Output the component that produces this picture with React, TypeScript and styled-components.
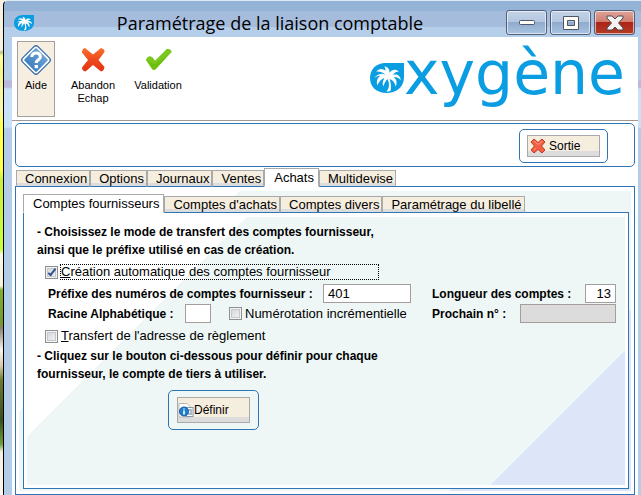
import React, { useState } from "react";
import styled, { createGlobalStyle, css } from "styled-components";

const BLUE = "#2e75b6";
const CREAM = "#f5edde";
const GREY = "#dcdcdc";
const BRAND = "#0a9de2";

const GlobalStyle = createGlobalStyle`
  *, *::before, *::after { box-sizing: border-box; }
  body {
    margin: 0;
    background: #fff;
    color: #000;
    font: 12px/16px "Liberation Sans", Arial, sans-serif;
  }
  button, input { font: inherit; color: inherit; margin: 0; }
`;

const Desktop = styled.div`
  display: flex;
  min-height: 100vh;
  padding-left: 3px;
  background: linear-gradient(
    #f4f1e2 0 50px, #b9c27a 52px, #ffff9a 56px, #f6f58a 70px, #f8f6b0 110px, #ffff50 125px,
    #fdff48 170px, #c8ee40 180px, #ccff3c 250px, #f6f8e6 254px, #f4f0de 286px, #83ad2e 290px,
    #75982c 324px, #8a8270 328px, #f7f4ee 350px, #d6c9a8 366px, #6d7a30 380px, #38501c 420px,
    #6f9c3c 444px, #f3efe2 452px, #fbf6ec 495px
  );
`;

const Window = styled.main`
  flex: 1;
  min-width: 0;
  display: flex;
  flex-direction: column;
  border-left: 1px solid #000;
  border-top: 1px solid #dfe9f4;
  border-top-left-radius: 5px;
  padding: 0 3px 0 8px;
  background: linear-gradient(
    #95b3d6 0 10px, #a6bcdd 10px 26px, #b5cfea 26px 78px, #b9b9dc 80px, #b9b9dc 86px,
    #c9e2f7 88px 126px, #b3cce7 128px
  );
`;

const TitleBar = styled.header`
  display: flex;
  align-items: center;
  height: 36px;
  padding: 7px 3px 0 2px;
`;

const Title = styled.h1`
  flex: 1;
  margin: 0;
  text-align: center;
  white-space: nowrap;
  font: 400 18px/26px "Open Sans", "Noto Sans", sans-serif;
`;

const WindowButtons = styled.div`
  display: flex;
  gap: 3px;
`;

const WindowButton = styled.button<{ $close?: boolean }>`
  width: 41px;
  height: 25px;
  padding: 0;
  display: flex;
  align-items: center;
  justify-content: center;
  border: 1px solid #50607a;
  border-radius: 3px;
  box-shadow: inset 0 0 0 1px rgba(255, 255, 255, 0.6);
  background: ${(p) =>
    p.$close
      ? "linear-gradient(#dfa49a, #cf7b6c 48%, #ac2418 50%, #b53c22)"
      : "linear-gradient(#c3d3e8, #b3c6df 48%, #91abcd 50%, #a8c2e0)"};
`;

const Client = styled.div`
  flex: 1;
  display: flex;
  flex-direction: column;
  background: #fff;
`;

const Toolbar = styled.div`
  display: flex;
  align-items: flex-start;
  height: 84px;
  padding: 4px 13px 0 5px;
  border-bottom: 1px solid #a09898;
`;

const ToolButton = styled.button<{ $active?: boolean; $wide?: boolean }>`
  display: flex;
  flex-direction: column;
  align-items: center;
  width: ${(p) => (p.$active ? "38px" : p.$wide ? "76px" : "54px")};
  height: 76px;
  padding: 1px 0 0;
  border: 1px solid ${(p) => (p.$active ? "#a4a09c" : "transparent")};
  background: ${(p) => (p.$active ? "#f6eee0" : "transparent")};
  font-size: 11px;
  line-height: 13px;
  svg { margin-bottom: 2px; }
`;

const Brand = styled.div`
  display: flex;
  align-items: flex-start;
  height: 76px;
  margin-left: auto;
  color: ${BRAND};
  font: 400 60px/64px "DejaVu Sans", sans-serif;
`;

const BrandEmblem = styled.span`
  display: flex;
  padding-top: 22px;
`;

const Body = styled.div`
  flex: 1;
  display: flex;
  flex-direction: column;
  padding: 2px 3px 0;
`;

const ActionBar = styled.div`
  display: flex;
  justify-content: flex-end;
  padding: 5px 26px 3px;
  border: 1px solid ${BLUE};
  border-radius: 5px;
`;

const ButtonFrame = styled.div<{ $tall?: boolean }>`
  display: flex;
  padding: ${(p) => (p.$tall ? "6px 8px" : "5px 7px")};
  border: 1px solid ${BLUE};
  border-radius: 5px;
`;

const PushButton = styled.button<{ $tall?: boolean }>`
  display: flex;
  align-items: center;
  gap: ${(p) => (p.$tall ? "0" : "3px")};
  width: 73px;
  height: ${(p) => (p.$tall ? "26px" : "22px")};
  padding: ${(p) => (p.$tall ? "0" : "0 0 0 2px")};
  border: 1px solid #a9a9a9;
  background: linear-gradient(to top, ${GREY} 5px, ${CREAM} 5px);
`;

const TabList = styled.div`
  display: flex;
  align-items: flex-end;
  height: 19px;
  margin-bottom: -1px;
`;

const Tab = styled.button<{ $active: boolean }>`
  position: relative;
  display: flex;
  align-items: flex-end;
  height: 17px;
  padding: 0 2px 0 8px;
  white-space: nowrap;
  border: 1px solid #aaa;
  border-bottom-color: ${BLUE};
  font-size: 13px;
  line-height: 15px;
  background: linear-gradient(to top, ${GREY} 3px, ${CREAM} 3px);
  ${(p) =>
    p.$active &&
    css`
      align-items: center;
      height: 19px;
      padding: 0 4px 0 9px;
      background: #fff;
      border-bottom-color: #fff;
    `}
`;

const MainTabs = styled.div`
  margin-top: 1px;
  padding-left: 1px;
`;

/* A bordered page whose inset backdrop shows two diagonal corners. */
const TabPage = styled.section<{ $near: number; $far: number }>`
  flex: 1;
  display: flex;
  flex-direction: column;
  padding: 4px 3px 3px;
  border: 1px solid ${BLUE};
  background: linear-gradient(
      135deg,
      #fff ${(p) => p.$near}px,
      #eef7f6 ${(p) => p.$near}px calc(100% - ${(p) => p.$far}px),
      #dde6f8 calc(100% - ${(p) => p.$far}px)
    )
    content-box;
`;

const SubTabs = styled.div`
  flex: 1;
  display: flex;
  flex-direction: column;
  padding: 3px 2px 2px 4px;
`;

const PageShell = styled.div`
  flex: 1;
  display: flex;
  background: #fff;
`;

const Form = styled.form`
  flex: 1;
  display: flex;
  flex-direction: column;
  padding: 6px 9px 4px 10px;
`;

const Hint = styled.p<{ $spaced?: boolean }>`
  margin: ${(p) => (p.$spaced ? "3px" : "0")} 0 0;
  font-weight: 700;
  line-height: 18px;
`;

const Check = styled.label`
  display: flex;
  align-items: center;
  gap: 2px;
  height: 16px;
`;

const FormCheck = styled(Check)`
  margin: 5px 0 0 8px;
`;

const NumberingCheck = styled(Check)`
  margin-left: 18px;
`;

const CheckText = styled.span<{ $focused?: boolean }>`
  width: ${(p) => (p.$focused ? "319px" : "auto")};
  border: 1px dotted ${(p) => (p.$focused ? "#000" : "transparent")};
  font-size: 13px;
  line-height: 14px;
  white-space: nowrap;
`;

const CheckBox = styled.input`
  appearance: none;
  position: relative;
  flex: none;
  width: 13px;
  height: 13px;
  border: 1px solid #8e8f8f;
  background: linear-gradient(135deg, #cfd3d8, #f6f6f6);
  box-shadow: inset 0 0 0 1px #f4f4f4, inset 0 0 0 2px #c4c8cc;
  &:checked::after {
    content: "";
    position: absolute;
    left: 4px;
    top: 0;
    width: 4px;
    height: 9px;
    border: solid #33508f;
    border-width: 0 2px 2px 0;
    transform: rotate(38deg);
  }
`;

const Fields = styled.div`
  display: grid;
  grid-template-columns: 1fr 184px;
  row-gap: 1px;
  margin: 4px 0 0 11px;
`;

const Field = styled.div<{ $spread?: boolean }>`
  display: flex;
  align-items: center;
  height: 19px;
  justify-content: ${(p) => (p.$spread ? "space-between" : "flex-start")};
`;

const FieldLabel = styled.label<{ $width?: number }>`
  font-weight: 700;
  white-space: nowrap;
  width: ${(p) => (p.$width ? `${p.$width}px` : "auto")};
`;

const TextBox = styled.input<{ $width: number; $right?: boolean }>`
  width: ${(p) => p.$width}px;
  height: 19px;
  padding: 0 4px;
  border: 1px solid #a59c9c;
  border-radius: 0;
  background: #fff;
  font-size: 13px;
  text-align: ${(p) => (p.$right ? "right" : "left")};
  &:disabled { background: ${GREY}; }
`;

const DefineRow = styled.div`
  display: flex;
  margin: 7px 0 0 131px;
`;

const PALM =
  "M17 13 C14 9 9 9 4 14 C7 12 9 12 10 12 C7 14 6 17 7 21 C9 17 11 15 14 14 C12 17 12 20 13 22 C14 19 15 17 17 15 C19 19 19 23 16 27 L20 26 C21 21 20 18 19 15 C22 16 24 18 25 22 C27 17 25 15 23 13 C26 13 28 14 30 16 C29 11 26 10 22 11 C24 9 26 8 28 8 C25 5 21 6 19 9 C19 6 18 4 14 3 C15 5 15 6 15 7 C12 5 9 5 6 8 C10 8 14 9 17 13 Z";

const Emblem = ({ width, height }: { width: number; height: number }) => (
  <svg width={width} height={height} viewBox="0 0 33 28" preserveAspectRatio="none" aria-hidden="true">
    <path d="M15 0 H33 V13 C33 23 25 28 16 28 C6 28 0 22 0 14 C0 6 6 0 15 0 Z" fill={BRAND} />
    <path d={PALM} fill="#fff" />
  </svg>
);

const HelpIcon = () => (
  <svg width="34" height="34" viewBox="0 0 34 34" aria-hidden="true">
    <defs>
      <linearGradient id="help" x1="0" y1="0" x2="0" y2="1">
        <stop offset="0" stopColor="#6ea3d6" />
        <stop offset="1" stopColor="#3f7fbf" />
      </linearGradient>
    </defs>
    <rect x="6" y="6" width="22" height="22" rx="3" fill="#3b6ea8" stroke="#3b6ea8" transform="rotate(45 17 17)" />
    <rect x="7.5" y="7.5" width="19" height="19" rx="2" fill="url(#help)" stroke="#fff" strokeWidth="1.6" transform="rotate(45 17 17)" />
    <path d="M12.8 14 C12.8 8.6 21.6 8.8 21.4 13.8 C21.2 16.8 17.4 16.8 17.2 20" fill="none" stroke="#fff" strokeWidth="3" />
    <rect x="15.6" y="22" width="3.4" height="3.2" fill="#fff" />
  </svg>
);

const CrossIcon = () => (
  <svg width="34" height="34" viewBox="0 0 34 34" aria-hidden="true">
    <defs>
      <linearGradient id="cross" x1="0" y1="0" x2="0" y2="1">
        <stop offset="0" stopColor="#f9702c" />
        <stop offset=".5" stopColor="#ee4a1c" />
        <stop offset="1" stopColor="#e23312" />
      </linearGradient>
    </defs>
    <path
      d="M9 5 L17 11.5 L25 5 Q29 6 28.5 9 L22.5 17 L28.5 24 Q28 28 25 28.500 L17 22 L9.500 28.500 Q6 28 6 24.500 L12 17 L6 9.500 Q6 5.500 9 5 Z"
      fill="url(#cross)"
    />
  </svg>
);

const TickIcon = () => (
  <svg width="34" height="34" viewBox="0 0 34 34" aria-hidden="true">
    <path d="M5 17 Q7 12 11 14 L14 18 L26 6 Q30 6 30.500 9 L15 26 Q13 28 11 26 Z" fill="#6cbf0c" />
    <path d="M5 17 Q7 12 11 14 L14 18 L26 6 Q30 6 30.500 9 Q22 16 14 21 Q9 20 5 17 Z" fill="#7ac81e" />
  </svg>
);

const ExitIcon = () => (
  <svg width="16" height="16" viewBox="0 0 16 16" aria-hidden="true">
    <path
      d="M4 1 L8 4.500 L12 1 L15 4 L11.500 8 L15 12 L12 15 L8 11.500 L4 15 L1 12 L4.500 8 L1 4 Z"
      fill="#f2603f"
      stroke="#c0392b"
      strokeLinejoin="round"
    />
    <path d="M4 3 L8 6.500 L12 3 M4 12 L6 10" fill="none" stroke="#f99a80" />
  </svg>
);

const DefineIcon = () => (
  <svg width="16" height="18" viewBox="0 0 16 18" aria-hidden="true">
    <path d="M1 2.500 H9 L12 5.500 V16 H1 Z" fill="#fff" stroke="#b9b9b9" />
    <rect x="8" y="6.500" width="7" height="9" fill="#fff" stroke="#8796aa" />
    <path d="M10 9 H14 M12 11 H14 M10 13 H14" stroke="#52779f" />
    <circle cx="6" cy="10.500" r="4.500" fill="#1d7fd0" stroke="#155a9c" />
    <path d="M6 7.400 V8.600 M6 9.600 V13.400" stroke="#fff" strokeWidth="1.600" />
  </svg>
);

const MinimizeIcon = () => (
  <svg width="18" height="8" viewBox="0 0 18 8" aria-hidden="true">
    <rect x="1.5" y="1.5" width="15" height="4" rx="1" fill="#fffdf5" stroke="#4b5668" />
  </svg>
);

const MaximizeIcon = () => (
  <svg width="18" height="16" viewBox="0 0 18 16" aria-hidden="true">
    <path
      d="M1.500 1.500 H16.500 V14.500 H1.500 Z M5.500 5.500 V10.500 H12.500 V5.500 Z"
      fill="#fffdf5"
      fillRule="evenodd"
      stroke="#4b5668"
    />
  </svg>
);

const CloseIcon = () => (
  <svg width="20" height="16" viewBox="0 0 20 16" aria-hidden="true">
    <path
      d="M2 1 H7 L10 4 L13 1 H18 V3 L13.500 8 L18 13 V15 H13 L10 12 L7 15 H2 V13 L6.500 8 L2 3 Z"
      fill="#f4f2f0"
      stroke="#4b4a58"
      strokeLinejoin="round"
    />
  </svg>
);

const MAIN_TABS = ["Connexion", "Options", "Journaux", "Ventes", "Achats", "Multidevise"];
const SUB_TABS = ["Comptes fournisseurs", "Comptes d'achats", "Comptes divers", "Paramétrage du libellé"];

const Tabs = ({ items, initial }: { items: string[]; initial: number }) => {
  const [active, setActive] = useState(initial);
  return (
    <TabList role="tablist">
      {items.map((name, i) => (
        <Tab key={name} type="button" role="tab" aria-selected={i === active} $active={i === active} onClick={() => setActive(i)}>
          {name}
        </Tab>
      ))}
    </TabList>
  );
};

const SupplierForm = () => (
  <Form onSubmit={(e) => e.preventDefault()}>
    <Hint>
      - Choisissez le mode de transfert des comptes fournisseur,
      <br />
      ainsi que le préfixe utilisé en cas de création.
    </Hint>
    <FormCheck>
      <CheckBox type="checkbox" defaultChecked />
      <CheckText $focused><u>C</u>réation automatique des comptes fournisseur</CheckText>
    </FormCheck>
    <Fields>
      <Field>
        <FieldLabel htmlFor="prefixe" $width={275}>Préfixe des numéros de comptes fournisseur :</FieldLabel>
        <TextBox id="prefixe" defaultValue="401" $width={88} />
      </Field>
      <Field $spread>
        <FieldLabel htmlFor="longueur">Longueur des comptes :</FieldLabel>
        <TextBox id="longueur" defaultValue="13" $width={31} $right />
      </Field>
      <Field>
        <FieldLabel htmlFor="racine" $width={137}>Racine Alphabétique :</FieldLabel>
        <TextBox id="racine" $width={26} />
        <NumberingCheck>
          <CheckBox type="checkbox" />
          <CheckText>Numérotation incrémentielle</CheckText>
        </NumberingCheck>
      </Field>
      <Field $spread>
        <FieldLabel htmlFor="prochain">Prochain n° :</FieldLabel>
        <TextBox id="prochain" disabled $width={96} />
      </Field>
    </Fields>
    <FormCheck>
      <CheckBox type="checkbox" />
      <CheckText><u>T</u>ransfert de l'adresse de règlement</CheckText>
    </FormCheck>
    <Hint $spaced>
      - Cliquez sur le bouton ci-dessous pour définir pour chaque
      <br />
      fournisseur, le compte de tiers à utiliser.
    </Hint>
    <DefineRow>
      <ButtonFrame $tall>
        <PushButton type="button" $tall><DefineIcon />Définir</PushButton>
      </ButtonFrame>
    </DefineRow>
  </Form>
);

export default function App() {
  return (
    <>
      <GlobalStyle />
      <Desktop>
        <Window>
          <TitleBar>
            <Emblem width={20} height={16} />
            <Title>Paramétrage de la liaison comptable</Title>
            <WindowButtons>
              <WindowButton type="button" aria-label="Réduire"><MinimizeIcon /></WindowButton>
              <WindowButton type="button" aria-label="Agrandir"><MaximizeIcon /></WindowButton>
              <WindowButton type="button" aria-label="Fermer" $close><CloseIcon /></WindowButton>
            </WindowButtons>
          </TitleBar>
          <Client>
            <Toolbar>
              <ToolButton type="button" $active><HelpIcon />Aide</ToolButton>
              <ToolButton type="button" $wide><CrossIcon />Abandon<br />Echap</ToolButton>
              <ToolButton type="button"><TickIcon />Validation</ToolButton>
              <Brand>
                <BrandEmblem><Emblem width={34} height={30} /></BrandEmblem>
                xygène
              </Brand>
            </Toolbar>
            <Body>
              <ActionBar>
                <ButtonFrame>
                  <PushButton type="button"><ExitIcon />Sortie</PushButton>
                </ButtonFrame>
              </ActionBar>
              <MainTabs><Tabs items={MAIN_TABS} initial={4} /></MainTabs>
              <TabPage $near={156} $far={128}>
                <SubTabs>
                  <Tabs items={SUB_TABS} initial={0} />
                  <PageShell>
                    <TabPage $near={155} $far={95}>
                      <SupplierForm />
                    </TabPage>
                  </PageShell>
                </SubTabs>
              </TabPage>
            </Body>
          </Client>
        </Window>
      </Desktop>
    </>
  );
}
